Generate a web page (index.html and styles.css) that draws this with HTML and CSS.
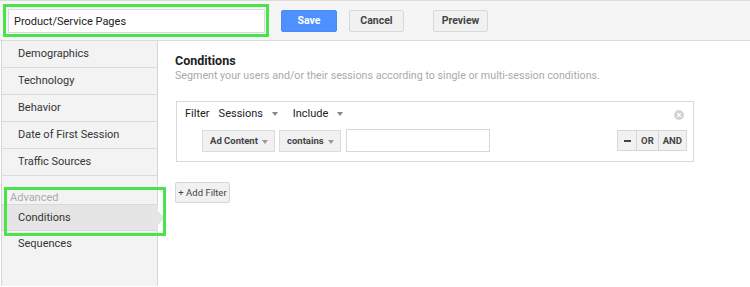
FILE: index.html
```html
<!DOCTYPE html>
<html lang="en">
<head>
    <meta charset="UTF-8">
    <title>Segment Editor</title>
    <link rel="stylesheet" href="styles.css">
</head>
<body>
    <div class="topbar">
        <div class="name-box">
            <input type="text" class="name-input" value="Product/Service Pages">
        </div>
        <button class="btn btn-primary">Save</button>
        <button class="btn">Cancel</button>
        <button class="btn btn-preview">Preview</button>
    </div>
    <div class="editor">
        <div class="sidebar">
            <div class="nav-item">Demographics</div>
            <div class="nav-item">Technology</div>
            <div class="nav-item">Behavior</div>
            <div class="nav-item">Date of First Session</div>
            <div class="nav-item">Traffic Sources</div>
            <div class="advanced">
                <div class="nav-label">Advanced</div>
                <div class="nav-item active">Conditions</div>
            </div>
            <div class="nav-item plain">Sequences</div>
        </div>
        <div class="main">
            <h2>Conditions</h2>
            <p class="subtitle">Segment your users and/or their sessions according to single or multi-session conditions.</p>
            <div class="filter-box">
                <div class="filter-head">
                    <span class="filter-label">Filter</span>
                    <span class="menu">Sessions <span class="caret"></span></span>
                    <span class="menu">Include <span class="caret"></span></span>
                    <span class="close">
                        <svg width="10" height="10" viewBox="0 0 10 10">
                            <circle cx="5" cy="5" r="5" fill="#d4d4d4"/>
                            <path d="M3.2 3.2 L6.8 6.8 M6.8 3.2 L3.2 6.8" stroke="#fff" stroke-width="1.2"/>
                        </svg>
                    </span>
                </div>
                <div class="filter-row">
                    <span class="select select-dim">Ad Content <span class="caret"></span></span>
                    <span class="select select-op">contains <span class="caret"></span></span>
                    <input type="text" class="value-input">
                    <div class="logic">
                        <span class="logic-btn minus"><span class="dash"></span></span>
                        <span class="logic-btn">OR</span>
                        <span class="logic-btn">AND</span>
                    </div>
                </div>
            </div>
            <button class="add-filter">+ Add Filter</button>
        </div>
    </div>
</body>
</html>
```

FILE: styles.css
```css
* {
    box-sizing: border-box;
    margin: 0;
    padding: 0;
}
body {
    font-family: Roboto, 'Liberation Sans', sans-serif;
    background: #fff;
    color: #333;
    width: 750px;
    height: 287px;
    overflow: hidden;
}
.topbar {
    display: flex;
    align-items: center;
    height: 41px;
    background: #f5f5f5;
    border-top: 1px solid #dcdcdc;
    border-bottom: 1px solid #dcdcdc;
    padding-left: 3px;
}
.name-box {
    width: 266px;
    height: 33px;
    border: 3px solid #4be34b;
    padding: 2px 1px 1px 2px;
}
.name-input {
    width: 100%;
    height: 100%;
    border: 1px solid #d9d9d9;
    background: #fff;
    font-family: inherit;
    font-size: 11px;
    color: #222;
    padding-left: 5px;
    outline: none;
}
.btn {
    height: 22px;
    width: 55px;
    margin-left: 12px;
    font-family: inherit;
    font-size: 10.5px;
    font-weight: bold;
    color: #444;
    background: #f1f1f1;
    border: 1px solid #d8d8d8;
    border-radius: 2px;
}
.btn-primary {
    margin-left: 12px;
    width: 56px;
    background: #4d90fe;
    border-color: #4a8af4;
    color: #fff;
}
.btn-preview {
    margin-left: 29px;
}
.editor {
    display: flex;
    height: 245px;
}
.sidebar {
    width: 157px;
    margin-left: 1px;
    background: #f3f3f3;
    border-left: 1px solid #d6d6d6;
    border-right: 1px solid #d6d6d6;
}
.nav-item {
    height: 27px;
    line-height: 26px;
    padding-left: 16px;
    font-size: 11px;
    color: #333;
    border-bottom: 1px solid #dadada;
}
.nav-item.plain {
    border-bottom: none;
}
.advanced {
    position: relative;
    margin-top: 15px;
}
.advanced::after {
    content: '';
    position: absolute;
    left: 2px;
    right: -9px;
    top: -4px;
    bottom: -5px;
    border: 3px solid #4be34b;
}
.nav-label {
    font-size: 11px;
    color: #aaa;
    padding-left: 8px;
    height: 13px;
    line-height: 13px;
}
.nav-item.active {
    position: relative;
    background: #e5e5e5;
    border-top: 1px solid #dadada;
    margin-right: -1px;
}
.nav-item.active::before {
    content: '';
    position: absolute;
    right: -7px;
    top: 6px;
    border-left: 7px solid #e5e5e5;
    border-top: 7px solid transparent;
    border-bottom: 7px solid transparent;
}
.main {
    flex: 1;
    padding: 13px 0 0 17px;
}
h2 {
    font-size: 12.5px;
    font-weight: bold;
    color: #222;
    line-height: 14px;
}
.subtitle {
    font-size: 10.7px;
    color: #aaa;
    margin-top: 1px;
    line-height: 14px;
}
.filter-box {
    width: 518px;
    height: 61px;
    margin-top: 18px;
    margin-left: 1px;
    border: 1px solid #d9d9d9;
}
.filter-head {
    display: flex;
    align-items: center;
    height: 22px;
    padding: 0 8px;
    font-size: 11px;
    color: #222;
}
.filter-label {
    margin-right: 9px;
}
.menu {
    margin-right: 15px;
}
.caret {
    display: inline-block;
    margin-left: 6px;
    vertical-align: middle;
    border-top: 4px solid #888;
    border-left: 3px solid transparent;
    border-right: 3px solid transparent;
}
.close {
    margin-left: auto;
    display: flex;
    margin-right: 1px;
    margin-top: 4px;
}
.filter-row {
    display: flex;
    align-items: center;
    padding-left: 25px;
    margin-top: 5px;
}
.select {
    display: flex;
    align-items: center;
    height: 22px;
    padding-left: 7px;
    background: #f1f1f1;
    border: 1px solid #dcdcdc;
    font-size: 9.5px;
    font-weight: bold;
    color: #444;
    margin-right: 4px;
}
.select .caret {
    margin-left: auto;
    margin-right: 6px;
    margin-top: 3px;
    border-top-color: #999;
}
.select-dim {
    width: 73px;
}
.select-op {
    width: 62px;
}
.value-input {
    width: 144px;
    height: 23px;
    border: 1px solid #d6d6d6;
    margin-left: 1px;
}
.logic {
    display: flex;
    margin-left: auto;
    margin-right: 6px;
}
.logic-btn {
    height: 21px;
    line-height: 19px;
    padding: 0 4px;
    font-size: 9.5px;
    font-weight: bold;
    color: #444;
    background: #f1f1f1;
    border: 1px solid #d6d6d6;
    margin-left: -1px;
}
.logic-btn.minus {
    display: flex;
    align-items: center;
    justify-content: center;
    width: 20px;
    padding: 0;
}
.dash {
    width: 7px;
    height: 2px;
    background: #444;
}
.add-filter {
    margin-top: 20px;
    height: 21px;
    width: 55px;
    font-family: inherit;
    font-size: 9.5px;
    color: #444;
    background: #f1f1f1;
    border: 1px solid #d6d6d6;
    border-radius: 2px;
}
```
